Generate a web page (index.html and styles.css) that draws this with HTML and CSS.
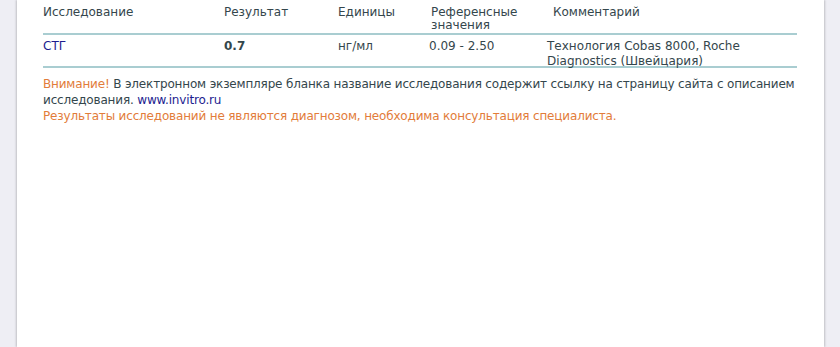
FILE: index.html
```html
<!DOCTYPE html>
<html lang="ru">
<head>
<meta charset="utf-8">
<link rel="stylesheet" href="styles.css">
</head>
<body>
<div class="paper">
  <table class="results">
    <thead>
      <tr>
        <th class="c-name">Исследование</th>
        <th class="c-res">Результат</th>
        <th class="c-unit">Единицы</th>
        <th class="c-ref">Референсные<br>значения</th>
        <th class="c-com">Комментарий</th>
      </tr>
    </thead>
    <tbody>
      <tr>
        <td class="c-name"><div class="cell"><a class="link" href="#">СТГ</a></div></td>
        <td class="c-res"><div class="cell"><b>0.7</b></div></td>
        <td class="c-unit"><div class="cell">нг/мл</div></td>
        <td class="c-ref"><div class="cell">0.09 - 2.50</div></td>
        <td class="c-com"><div class="cell">Технология Cobas 8000, Roche<br>Diagnostics (Швейцария)</div></td>
      </tr>
    </tbody>
  </table>
  <div class="notes">
    <p><span class="warn">Внимание!</span> В электронном экземпляре бланка название исследования содержит ссылку на страницу сайта с описанием исследования. <a class="link" href="#">www.invitro.ru</a></p>
    <p class="warn">Результаты исследований не являются диагнозом, необходима консультация специалиста.</p>
  </div>
</div>
</body>
</html>
```

FILE: styles.css
```css
html, body {
  margin: 0;
  padding: 0;
  height: 100%;
}
body {
  background: #eeeef4;
  font-family: "DejaVu Sans", Verdana, sans-serif;
  font-size: 12px;
  line-height: 13px;
  color: #34464c;
}
.paper {
  margin: 0 16px 0 17px;
  min-height: 100%;
  background: #ffffff;
  box-shadow: -1px 0 2px rgba(0,0,0,0.18), 1px 0 2px rgba(0,0,0,0.18);
  padding: 6px 26px 0 26px;
  box-sizing: border-box;
}
.results {
  width: 754px;
  border-collapse: collapse;
}
.results th {
  font-weight: normal;
  text-align: left;
  vertical-align: top;
  padding: 0;
  border-bottom: 2px solid #a9cdd1;
  height: 28px;
  box-sizing: border-box;
}
.results td {
  text-align: left;
  vertical-align: top;
  padding: 4px 0 0 0;
  border-bottom: 2px solid #a9cdd1;
  line-height: 15px;
}
.cell {
  margin-bottom: -3px;
}
.c-name { width: 181px; }
.c-res { width: 114px; }
.c-unit { width: 91px; }
.c-ref { width: 118px; }
th.c-ref { padding-left: 2px; }
th.c-com { padding-left: 6px; }
.link {
  color: #1d1d8f;
  text-decoration: none;
}
.notes {
  padding-top: 8px;
  line-height: 16px;
  letter-spacing: -0.17px;
}
.notes p {
  margin: 0;
}
.warn {
  color: #e27c3a;
}
```
